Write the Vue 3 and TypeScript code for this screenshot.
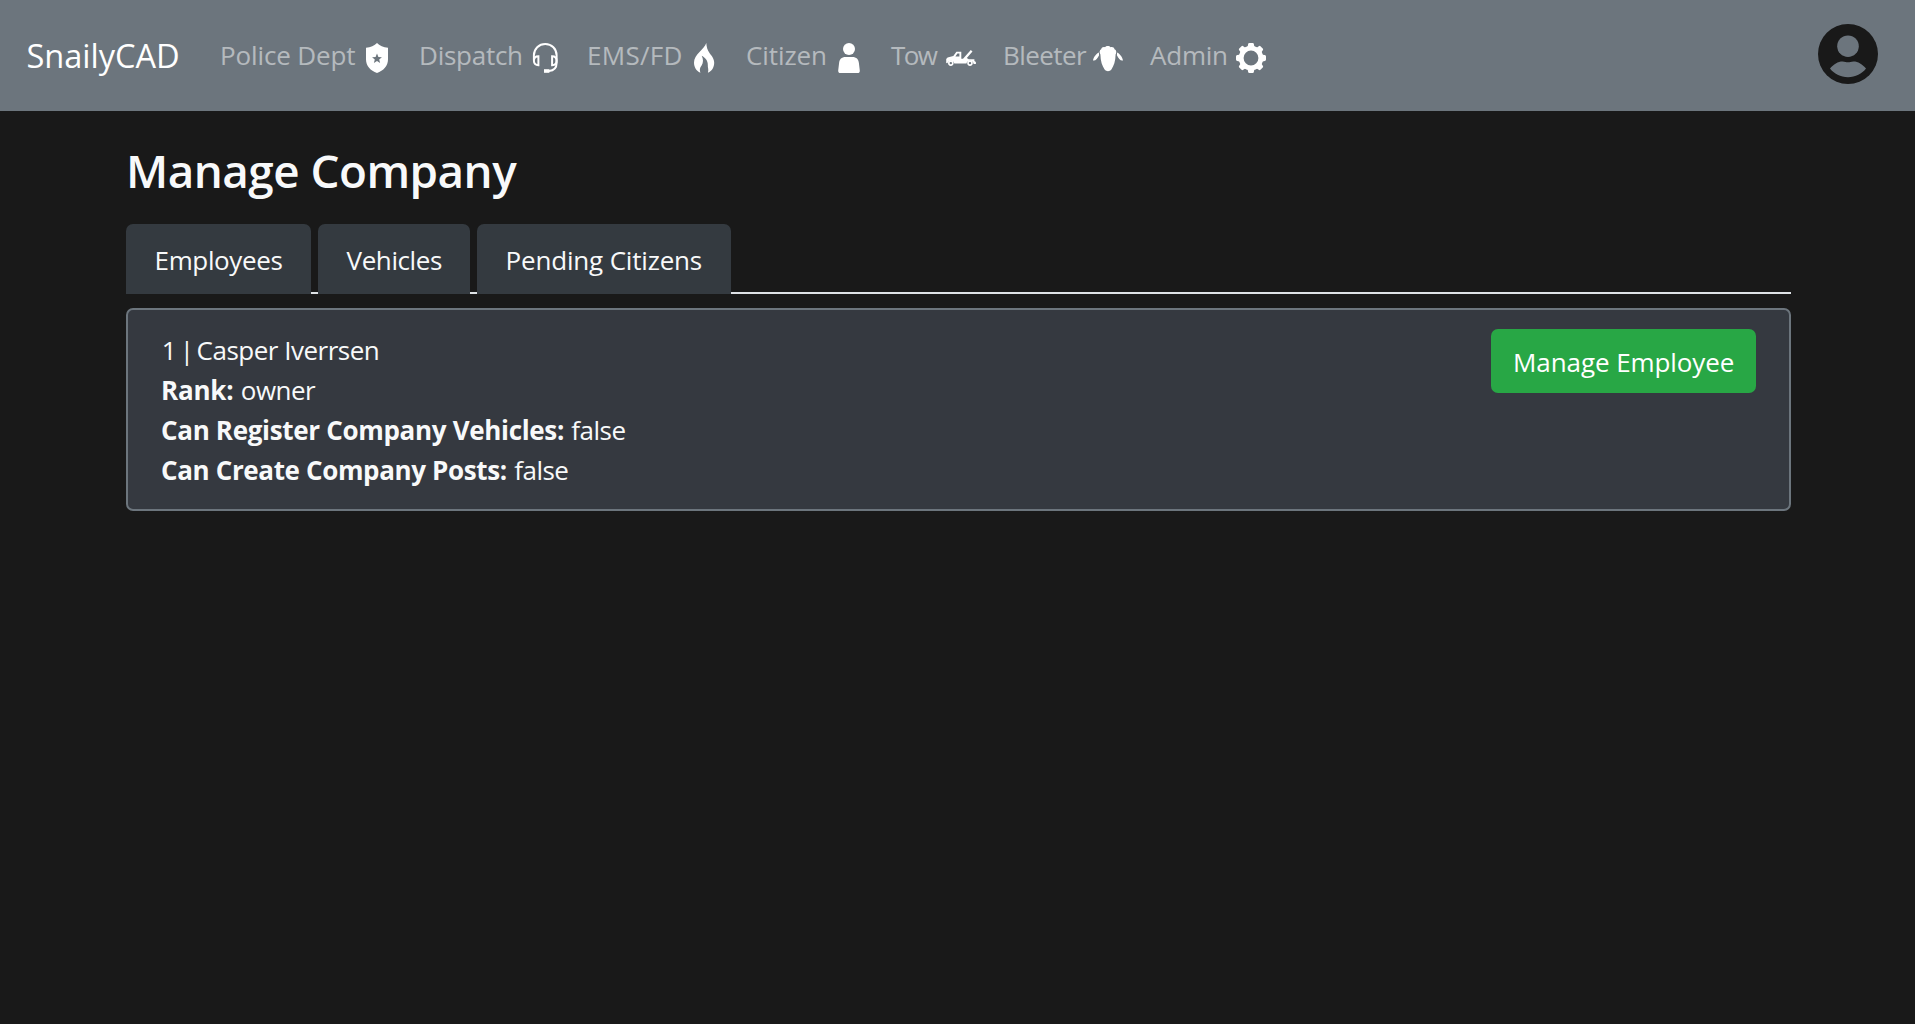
<script setup lang="ts">
interface NavEntry {
  label: string
  icon: string
  width: number
  spacing: number
}

interface Tab {
  label: string
  width: number
  spacing: number
}

const nav: NavEntry[] = [
  { label: 'Police Dept', icon: 'shield', width: 142.5, spacing: -0.14 },
  { label: 'Dispatch', icon: 'headset', width: 111.5, spacing: -0.27 },
  { label: 'EMS/FD', icon: 'flame', width: 102.5, spacing: 0.28 },
  { label: 'Citizen', icon: 'person', width: 88.5, spacing: -0.11 },
  { label: 'Tow', icon: 'tow', width: 55.5, spacing: -1.7 },
  { label: 'Bleeter', icon: 'sheep', width: 90.5, spacing: -0.6 },
  { label: 'Admin', icon: 'gear', width: 86.5, spacing: -0.28 },
]

const tabs: Tab[] = [
  { label: 'Employees', width: 185, spacing: -0.38 },
  { label: 'Vehicles', width: 152, spacing: -0.41 },
  { label: 'Pending Citizens', width: 254, spacing: -0.18 },
]

const teeth = [0, 45, 90, 135, 180, 225, 270, 315]
</script>

<template>
  <div class="app">
    <nav class="navbar">
      <a class="brand">SnailyCAD</a>
      <ul class="links">
        <li v-for="n in nav" :key="n.label" class="link">
          <span class="label" :style="{ width: n.width + 'px', letterSpacing: n.spacing + 'px' }">{{ n.label }}</span>
          <svg class="icon" viewBox="0 0 30 30" fill="#fff">
            <path
              v-if="n.icon === 'shield'"
              fill-rule="evenodd"
              d="M15 .1C12.6 2.7 8.5 4.5 4 4.8V16.5C4 23 8.5 27.7 15 29.9C21.5 27.7 26 23 26 16.5V4.8C21.5 4.5 17.4 2.7 15 .1ZM15 10.6L16.4 13.9L19.9 14.2L17.2 16.5L18.1 20L15 18.1L11.9 20L12.8 16.5L10.1 14.2L13.6 13.9Z"
            />
            <g v-else-if="n.icon === 'headset'" fill="none" stroke="#fff" stroke-width="2">
              <path d="M3.9 17V12.3C3.9 5.8 8.9 1 15.3 1S26.6 5.8 26.6 12.3V20C26.6 25 24 27.6 19 28" />
              <path d="M8.4 13.3V22.2C5.6 22.2 3.9 20.6 3.9 17.8S5.6 13.3 8.4 13.3ZM22.1 13.3V22.2C24.9 22.2 26.6 20.6 26.6 17.8S24.9 13.3 22.1 13.3Z" />
              <rect x="14" y="26.2" width="5.4" height="3.6" fill="#fff" stroke="none" />
            </g>
            <path
              v-else-if="n.icon === 'flame'"
              d="M17.3 0C15 6.5 5 11.5 5 19.5C5 24 7.3 28 11.4 29.8C10.4 27 10.7 25 12.6 22.5C14.5 19.8 14.4 16 12.7 12.8C16.4 14.6 19 18.2 18.8 22C18.6 25 20 26.5 18.9 29.8C23.2 28 25.2 24 25.2 19.8C25.2 15.5 22.8 13.2 20.5 10C18.5 7 17.5 4 17.3 0Z"
            />
            <g v-else-if="n.icon === 'person'">
              <circle cx="15" cy="6.1" r="6" />
              <path d="M11.6 14H18.4C22.4 14 24.6 16.2 24.9 20L25.8 27.4C26 29 25 30 23.6 30H6.4C5 30 4 29 4.2 27.4L5.1 20C5.4 16.2 7.6 14 11.6 14Z" />
            </g>
            <g v-else-if="n.icon === 'tow'">
              <path
                fill-rule="evenodd"
                d="M.2 20V16L1.6 14.4L7.3 13L10.4 8.7H15.3V15.7H17L24.8 7.1L26.5 8.4L20.8 15L22.8 16.2H28.4V18L29.9 19V21H27.6A3.6 3.6 0 0 0 20.5 20.6H8.3A3.6 3.6 0 0 0 1.3 20.3ZM9.4 13.4H13.4V10.5H11.4Z"
              />
              <circle cx="4.8" cy="20.1" r="2" fill="#6c757d" stroke="#fff" stroke-width="1.6" />
              <circle cx="24" cy="20.1" r="2" fill="#6c757d" stroke="#fff" stroke-width="1.6" />
            </g>
            <g v-else-if="n.icon === 'sheep'">
              <path d="M7.4 11.5C6.2 9.6 6.4 6.8 8.2 6.2C8.5 4.3 10.5 3.6 12 4.2C13.1 2.6 16.5 2.6 17.6 4.2C19.3 3.5 21.2 4.4 21.5 6.2C23.5 6.8 23.8 9.6 22.6 11.5C22.6 18 20.7 23 18.4 26.5C16.7 28.7 13.3 28.7 11.6 26.5C9.3 23 7.4 18 7.4 11.5Z" />
              <path d="M5.9 9.4C3.2 10.6 .5 14 0 17.4C2.2 18.2 4.6 15.6 6.1 12.2ZM24.1 9.4C26.8 10.6 29.5 14 30 17.4C27.8 18.2 25.4 15.6 23.9 12.2Z" />
            </g>
            <g v-else>
              <circle cx="15" cy="15" r="9.8" fill="none" stroke="#fff" stroke-width="4.8" />
              <path v-for="a in teeth" :key="a" d="M10.8 4.6Q12 3.6 12.1 1.2Q12.2 0 13.4 0H16.6Q17.8 0 17.9 1.2Q18 3.6 19.2 4.6Z" :transform="`rotate(${a} 15 15)`" />
            </g>
          </svg>
        </li>
      </ul>
      <svg class="avatar" viewBox="0 0 60 60">
        <circle cx="30" cy="30" r="30" fill="#191919" />
        <circle cx="30" cy="22.2" r="10.8" fill="#6c757d" />
        <path fill="#6c757d" d="M12 44.6C15.5 40 20 37.4 24.5 37.4C27 37.4 28 38.3 30 38.3S33 37.4 35.5 37.4C40 37.4 44.5 40 48 44.6C44 50 37.5 53.2 30 53.2S16 50 12 44.6Z" />
      </svg>
    </nav>

    <main class="container">
      <h3 class="title">Manage Company</h3>
      <ul class="tabs">
        <li v-for="t in tabs" :key="t.label" class="tab" :style="{ width: t.width + 'px', letterSpacing: t.spacing + 'px' }">{{ t.label }}</li>
      </ul>
      <section class="card">
        <div class="details">
          <div class="name">1 <span class="bar">|</span> Casper Iverrsen</div>
          <div class="row"><strong class="rank">Rank:</strong> <span>owner</span></div>
          <div class="row"><strong>Can Register Company Vehicles:</strong> <span>false</span></div>
          <div class="row"><strong class="posts">Can Create Company Posts:</strong> <span>false</span></div>
        </div>
        <button class="manage" type="button">Manage Employee</button>
      </section>
    </main>
  </div>
</template>

<style>
body {
  background: #191919;
}
</style>

<style scoped>
.app {
  min-height: 1024px;
  background: #191919;
  color: #f8f9fa;
  font: 400 26px/40px "Open Sans", "Noto Sans", sans-serif;
}
ul {
  list-style: none;
  margin: 0;
  padding: 0;
}
.navbar {
  display: flex;
  align-items: center;
  box-sizing: border-box;
  height: 111px;
  padding: 0 37px 0 26.5px;
  background: #6c757d;
}
.brand {
  width: 193px;
  color: #fff;
  font-size: 32.6px;
  line-height: 50px;
  letter-spacing: -0.05px;
}
.links {
  display: flex;
  gap: 26.5px;
  padding-bottom: 1px;
}
.link {
  display: flex;
  align-items: center;
  height: 40px;
  white-space: nowrap;
}
.label {
  box-sizing: border-box;
  padding-left: 0.6px;
  color: rgba(255, 255, 255, 0.5);
}
.icon {
  display: block;
  flex: none;
  width: 30px;
  height: 30px;
  margin-top: 6px;
}
.avatar {
  display: block;
  width: 60px;
  height: 60px;
  margin: 0 0 4px auto;
}
.container {
  width: 1665px;
  margin-left: 126px;
  padding-top: 31px;
}
.title {
  margin: 0 0 26px;
  font-size: 45.8px;
  font-weight: 600;
  line-height: 56px;
  letter-spacing: -0.52px;
}
.tabs {
  display: flex;
  gap: 7px;
  height: 68px;
  border-bottom: 2px solid #dee2e6;
}
.tab {
  box-sizing: border-box;
  height: 70px;
  padding: 16px 0 14px 28.6px;
  border-radius: 7px 7px 0 0;
  background: #343a40;
  white-space: nowrap;
}
.card {
  display: flex;
  justify-content: space-between;
  align-items: flex-start;
  box-sizing: border-box;
  height: 203px;
  margin-top: 14px;
  padding: 20px 33px 21px;
  border: 2px solid #6c757d;
  border-radius: 7px;
  background: #353940;
}
.name {
  padding-left: 0.8px;
  letter-spacing: -0.5px;
}
.bar {
  margin: 0 -3.1px 0 -2.8px;
}
.row span {
  letter-spacing: -0.5px;
}
.row strong {
  margin-right: 0.5px;
  font-weight: 700;
  letter-spacing: -0.32px;
}
.row .rank {
  letter-spacing: -0.2px;
}
.row .posts {
  letter-spacing: -0.36px;
}
.manage {
  width: 265px;
  height: 64px;
  margin: -1px 0 0;
  padding: 2px 0 0 22px;
  border: 0;
  border-radius: 7px;
  background: #28a745;
  color: #fff;
  font: inherit;
  letter-spacing: -0.08px;
  text-align: left;
  white-space: nowrap;
}
</style>
